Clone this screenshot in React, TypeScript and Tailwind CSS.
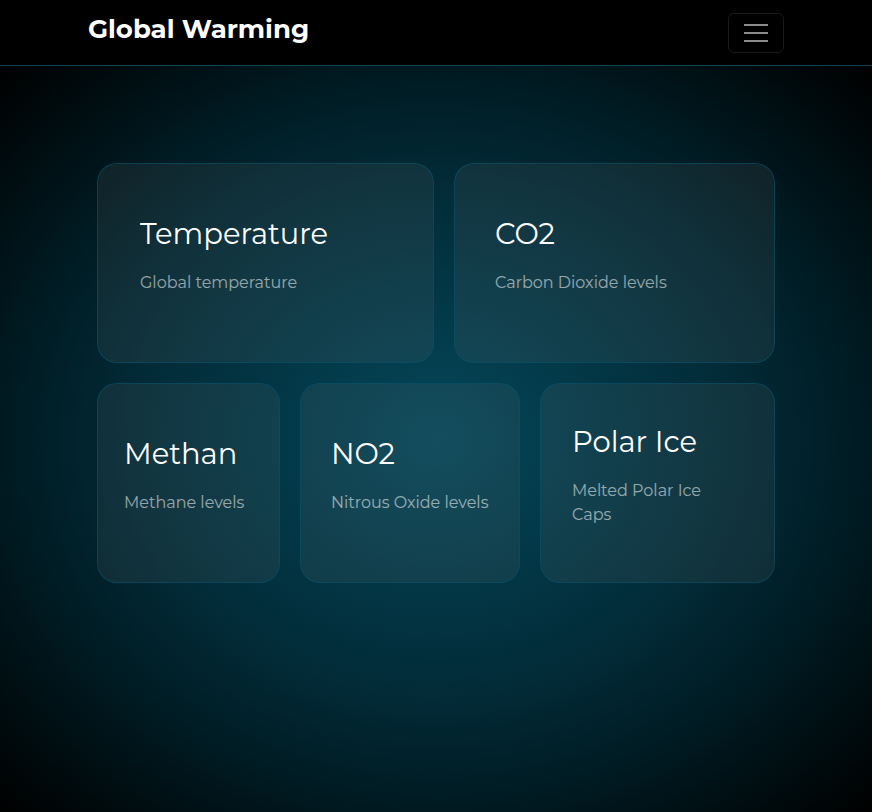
import React from "react";

type Topic = { title: string; text: string; inset: string };

const rows: { columns: string; topics: Topic[] }[] = [
  {
    columns: "grid-cols-[337fr_321fr]",
    topics: [
      { title: "Temperature", text: "Global temperature", inset: "pl-[42px]" },
      { title: "CO2", text: "Carbon Dioxide levels", inset: "pl-10" },
    ],
  },
  {
    columns: "grid-cols-[183fr_220fr_235fr]",
    topics: [
      { title: "Methan", text: "Methane levels", inset: "pl-[26px]" },
      { title: "NO2", text: "Nitrous Oxide levels", inset: "pl-[30px]" },
      { title: "Polar Ice", text: "Melted Polar Ice Caps", inset: "pl-[31px] pr-10" },
    ],
  },
];

function Card({ title, text, inset }: Topic) {
  return (
    <a
      href="#"
      className={
        "flex h-[200px] min-w-0 flex-col justify-center rounded-[20px] border border-[#085069]/65 bg-[#787878]/13 pb-[15px] " +
        inset
      }
    >
      <h2 className="text-[29px] leading-9 whitespace-nowrap text-white">{title}</h2>
      <p className="mt-[19px] leading-6 text-white/55">{text}</p>
    </a>
  );
}

export default function App() {
  return (
    <div className="flex min-h-screen flex-col bg-black font-[Montserrat,Inter,sans-serif]">
      <header className="border-b border-[#104254] bg-black">
        <div className="mx-auto flex max-w-[720px] items-start justify-between px-3 pt-[13px] pb-3">
          <a href="#" className="text-[26px] leading-8 font-bold text-white">
            Global Warming
          </a>
          <button
            type="button"
            aria-label="Toggle navigation"
            className="flex h-10 w-14 flex-col items-center justify-center gap-[6px] rounded-md border border-white/10"
          >
            <span className="h-[2px] w-6 bg-white/55" />
            <span className="h-[2px] w-6 bg-white/55" />
            <span className="h-[2px] w-6 bg-white/55" />
          </button>
        </div>
      </header>
      <main className="grow bg-[radial-gradient(ellipse,#04475a,#022a36_50%,#001920_71%,#000000)] pt-[97px]">
        <div className="mx-auto flex max-w-[720px] flex-col gap-5 px-[21px]">
          {rows.map(({ columns, topics }) => (
            <div key={columns} className={"grid gap-5 " + columns}>
              {topics.map((topic) => (
                <Card key={topic.title} {...topic} />
              ))}
            </div>
          ))}
        </div>
      </main>
    </div>
  );
}
